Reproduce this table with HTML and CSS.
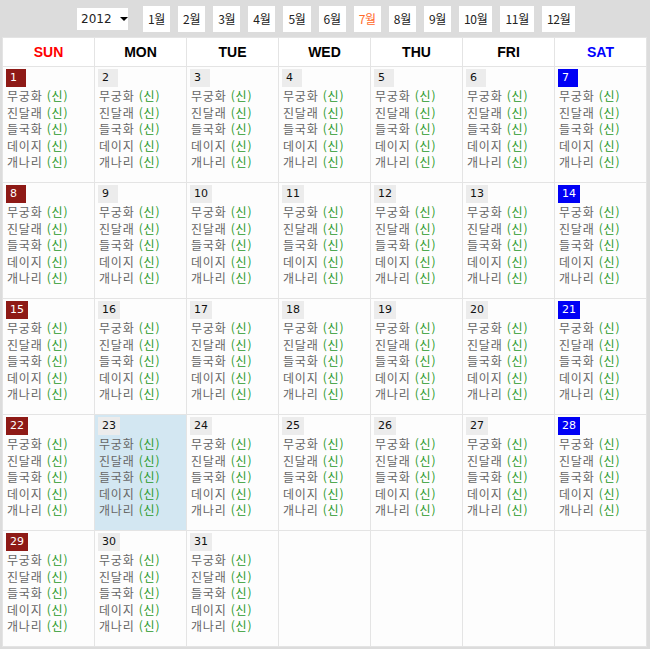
FILE: index.html
```html
<!DOCTYPE html>
<html lang="ko">
<head>
<meta charset="utf-8">
<link rel="stylesheet" href="styles.css">
</head>
<body>
<div class="bar">
  <div class="select">2012 <span class="caret"></span></div>
  <div class="months">
    <span class="btn">1월</span><span class="btn">2월</span><span class="btn">3월</span><span class="btn">4월</span><span class="btn">5월</span><span class="btn">6월</span><span class="btn on">7월</span><span class="btn">8월</span><span class="btn">9월</span><span class="btn">10월</span><span class="btn">11월</span><span class="btn">12월</span>
  </div>
</div>
<div class="cal" id="cal">
  <div class="hd sun">SUN</div><div class="hd">MON</div><div class="hd">TUE</div><div class="hd">WED</div><div class="hd">THU</div><div class="hd">FRI</div><div class="hd sat">SAT</div>
</div>
<script src="app.js"></script>
</body>
</html>
```
FILE: app.js
```js
var cal = document.getElementById('cal');
var names = ['무궁화', '진달래', '들국화', '데이지', '개나리'];
for (var i = 0; i < 35; i++) {
  var d = i + 1;
  var cell = document.createElement('div');
  cell.className = 'cell';
  if (d === 23) cell.className += ' today';
  if (d <= 31) {
    var num = document.createElement('span');
    num.className = 'num' + (i % 7 === 0 ? ' sun' : i % 7 === 6 ? ' sat' : '');
    num.textContent = d;
    cell.appendChild(num);
    var list = document.createElement('div');
    list.className = 'items';
    names.forEach(function (n) {
      var line = document.createElement('div');
      line.className = 'item';
      line.innerHTML = n + ' <span class="tag">(신)</span>';
      list.appendChild(line);
    });
    cell.appendChild(list);
  }
  cal.appendChild(cell);
}
```
FILE: styles.css
```css
html, body { margin: 0; padding: 0; }
body {
  background: #dcdcdc;
  font-family: "Noto Sans CJK KR", "DejaVu Sans", sans-serif;
  font-size: 12px;
  width: 650px;
  height: 649px;
  overflow: hidden;
}
.bar {
  height: 37px;
  display: flex;
  align-items: center;
  padding-left: 77px;
  box-sizing: border-box;
}
.select {
  width: 51px;
  height: 22px;
  background: #fff;
  box-sizing: border-box;
  padding-left: 4px;
  display: flex;
  align-items: center;
  font-family: "DejaVu Sans", sans-serif;
  font-size: 12px;
  color: #222;
  margin-top: 1px;
}
.caret {
  margin-left: 8px;
  width: 0; height: 0;
  border-left: 4px solid transparent;
  border-right: 4px solid transparent;
  border-top: 4px solid #000;
}
.months { display: flex; gap: 8px; margin-left: 15px; }
.btn {
  height: 26px;
  padding: 0 5px;
  background: #fff;
  display: flex;
  align-items: center;
  font-size: 12px;
  color: #222;
  letter-spacing: -0.3px;
}
.btn.on { color: #ff6a2a; }
.cal {
  display: grid;
  grid-template-columns: repeat(7, 91px);
  grid-template-rows: 28px repeat(5, 115px);
  gap: 1px;
  padding: 1px;
  margin-left: 2px;
  width: 645px;
  box-sizing: border-box;
  background: #e4e4e4;
}
.hd {
  background: #fff;
  display: flex;
  align-items: center;
  justify-content: center;
  font-family: "Liberation Sans", Arial, sans-serif;
  font-weight: bold;
  font-size: 14px;
  color: #000;
}
.hd.sun { color: #f00; }
.hd.sat { color: #00f; }
.cell {
  background: #fdfdfd;
  padding: 2px 3px;
}
.cell.today { background: #d3e7f2; }
.num {
  display: inline-block;
  min-width: 12px;
  height: 18px;
  line-height: 18px;
  padding: 0 4px;
  background: #ececec;
  color: #111;
  font-family: "DejaVu Sans", sans-serif;
  font-size: 11px;
  vertical-align: top;
}
.num.sun { background: #8e1a16; color: #fff; }
.num.sat { background: #0000f5; color: #fff; }
.items { padding-top: 1px; }
.item {
  color: #666;
  font-size: 12px;
  letter-spacing: 0.8px;
  line-height: 16.6px;
  white-space: nowrap;
  padding-left: 1px;
}
.tag { color: #2a9a2a; }
```
